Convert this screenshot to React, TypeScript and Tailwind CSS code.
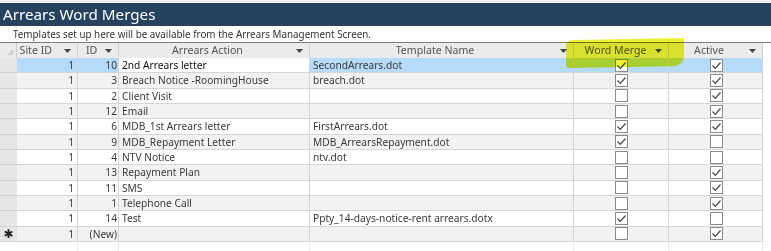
import React from 'react'

interface Row {
  siteId: string
  id: string
  action: string
  template: string
  merge: boolean
  active: boolean
}

const rows: Row[] = [
  { siteId: '1', id: '10', action: '2nd Arrears letter', template: 'SecondArrears.dot', merge: true, active: true },
  { siteId: '1', id: '3', action: 'Breach Notice -RoomingHouse', template: 'breach.dot', merge: true, active: true },
  { siteId: '1', id: '2', action: 'Client Visit', template: '', merge: false, active: true },
  { siteId: '1', id: '12', action: 'Email', template: '', merge: false, active: true },
  { siteId: '1', id: '6', action: 'MDB_1st Arrears letter', template: 'FirstArrears.dot', merge: true, active: true },
  { siteId: '1', id: '9', action: 'MDB_Repayment Letter', template: 'MDB_ArrearsRepayment.dot', merge: true, active: false },
  { siteId: '1', id: '4', action: 'NTV Notice', template: 'ntv.dot', merge: false, active: false },
  { siteId: '1', id: '13', action: 'Repayment Plan', template: '', merge: false, active: true },
  { siteId: '1', id: '11', action: 'SMS', template: '', merge: false, active: true },
  { siteId: '1', id: '1', action: 'Telephone Call', template: '', merge: false, active: true },
  { siteId: '1', id: '14', action: 'Test', template: 'Ppty_14-days-notice-rent arrears.dotx', merge: true, active: false },
  { siteId: '1', id: '(New)', action: '', template: '', merge: false, active: true },
]

const cols = 'grid grid-cols-[17px_61px_41px_191px_264px_95px_94px_1fr]'

const Arrow = () => (
  <svg width="7" height="4" viewBox="0 0 7 4" className="shrink-0">
    <path d="M0 0h7L3.5 4z" fill="#444" />
  </svg>
)

const Check = ({ on }: { on: boolean }) => (
  <div className="w-[13px] h-[13px] border border-[#8a8a8a] bg-white flex items-center justify-center">
    {on && (
      <svg width="11" height="11" viewBox="0 0 11 11">
        <path d="M1.5 5.5l2.8 2.8L9.5 2.5" stroke="#444" strokeWidth="1.2" fill="none" />
      </svg>
    )}
  </div>
)

export default function App() {
  return (
    <div className="w-[771px] h-[251px] overflow-hidden bg-white relative font-['Noto_Sans',sans-serif] text-[10.2px] text-[#333]">
      <div className="h-[3px] bg-[#eef0f2]" />
      <div className="h-[23px] bg-[#25435f] text-white text-[15.2px] leading-[23px] pl-[3px] whitespace-nowrap">Arrears Word Merges</div>
      <div className="h-[17px] border-b border-[#7d7d7d] pl-[13px] leading-[16px] text-[9.85px] text-[#333] whitespace-nowrap">
        Templates set up here will be available from the Arrears Management Screen.
      </div>

      {/* header row */}
      <div className={`${cols} h-[15px] grid-rows-[15px] bg-[#ebebeb] text-[#555] text-[10.6px] leading-[15px] whitespace-nowrap`}>
        <div className="border-r border-[#d0d0d0] relative">
          <svg width="6" height="6" viewBox="0 0 6 6" className="absolute left-[7px] bottom-[3px]">
            <path d="M6 0v6H0z" fill="#d2d2d2" />
          </svg>
        </div>
        <div className="border-r border-[#d0d0d0] flex items-center justify-end gap-[12px] pr-[6px]">Site ID<Arrow /></div>
        <div className="border-r border-[#d0d0d0] flex items-center justify-between pl-[8px] pr-[6px]">ID<Arrow /></div>
        <div className="border-r border-[#d0d0d0] flex items-center pr-[6px]">
          <span className="flex-1 text-center">Arrears Action</span><Arrow />
        </div>
        <div className="border-r border-[#d0d0d0] flex items-center pr-[6px]">
          <span className="flex-1 text-center">Template Name</span><Arrow />
        </div>
        <div className="border-r border-[#d0d0d0] flex items-center pr-[6px]">
          <span className="flex-1 text-center pl-[2px]">Word Merge</span><Arrow />
        </div>
        <div className="border-r border-[#d0d0d0] flex items-center pr-[6px]">
          <span className="flex-1 text-center">Active</span><Arrow />
        </div>
        <div className="bg-white" />
      </div>

      {rows.map((r, i) => {
        const selected = i === 0
        const bg = selected ? 'bg-[#b6dafa]' : i % 2 === 1 ? 'bg-[#f2f2f2]' : 'bg-white'
        const line = 'border-r border-b border-[#d6d6d6]'
        return (
          <div key={i} className={`${cols} h-[15.34px] grid-rows-[15.34px] leading-[14px] text-[#3a3a3a] whitespace-nowrap`}>
            <div className="bg-[#e6e6e6] border-b border-[#d2d2d2] flex items-center justify-center text-[12px] text-[#222] font-['DejaVu_Sans',sans-serif]">
              {r.id === '(New)' ? '✱' : ''}
            </div>
            <div className={`${bg} ${line} text-right pr-[3px]`}>{r.siteId}</div>
            <div className={`${bg} ${line} text-right pr-[1px]`}>{r.id}</div>
            <div className={`${selected ? 'bg-white text-[#111]' : bg} ${line} pl-[3px] overflow-hidden`}>{r.action}</div>
            <div className={`${bg} ${line} pl-[3px] overflow-hidden`}>{r.template}</div>
            <div className={`${bg} ${line} flex items-center justify-center pl-[1px]`}><Check on={r.merge} /></div>
            <div className={`${bg} ${line} flex items-center justify-center pl-[1px]`}><Check on={r.active} /></div>
            <div className="bg-white" />
          </div>
        )
      })}

      <div className={`${cols} h-[20px]`}>
        <div />
        <div className="border-r border-[#ededed]" />
        <div className="border-r border-[#ededed]" />
        <div className="border-r border-[#ededed]" />
        <div className="border-r border-[#ededed]" />
        <div className="border-r border-[#ededed]" />
        <div className="border-r border-[#ededed]" />
        <div />
      </div>

      {/* yellow highlighter mark */}
      <div className="absolute left-[566px] top-[39px] w-[118px] h-[28px] bg-[#e8f000] opacity-80 mix-blend-multiply rounded-tl-[6px] rounded-br-[10px] rounded-bl-[3px] -skew-y-1" />
    </div>
  )
}
